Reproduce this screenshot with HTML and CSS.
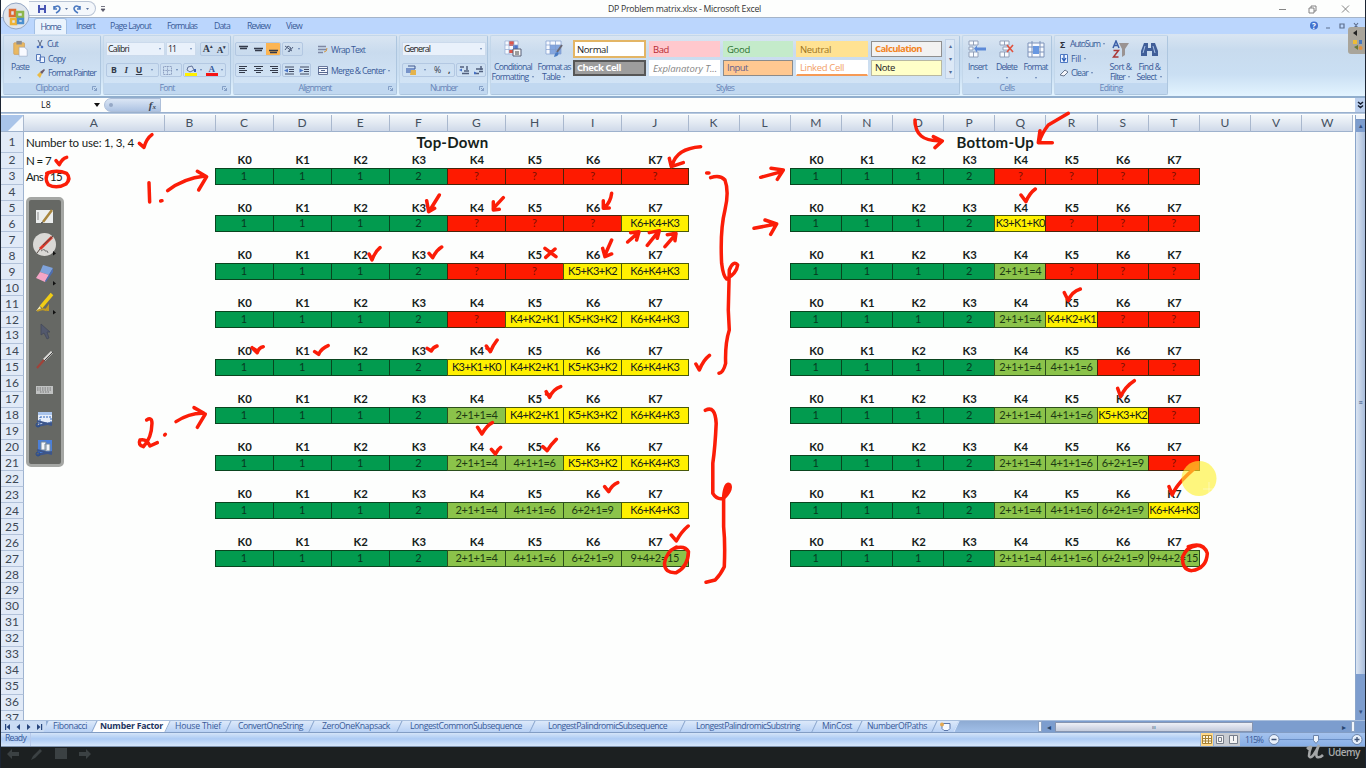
FILE: index.html
```html
<!DOCTYPE html>
<html lang="en">
<head>
<meta charset="utf-8">
<title>DP Problem matrix.xlsx - Microsoft Excel</title>
<link rel="stylesheet" href="styles.css">
</head>
<body>
<div class="screen">
  <header class="titlebar">
    <div class="qat">
      <svg width="60" height="12" viewBox="0 0 60 12"><path fill="#4653b3" d="M1 2h8v8H1z"/><path fill="#e8ecfa" d="M3 2h4v3H3zM3 7h4v3H3z"/><path d="M17 3v3h3M17 5q4-4 6 0q0 3-4 5M43 3v3h-3M43 5q-4-4-6 0q0 3 4 5" fill="none" stroke="#4a78c0" stroke-width="1.6"/><path fill="#58719d" d="M28 5h3l-1.5 2zM49 5h3l-1.5 2z"/></svg>
    </div>
    <svg class="qat-more" width="6" height="8"><path d="M1 1.5h4M1 4h4L3 6.500z" stroke="#556" fill="#556" stroke-width=".8"/></svg>
    <span class="title" data-w="153">DP Problem matrix.xlsx - Microsoft Excel</span>
    <svg class="win" width="76" height="12" viewBox="0 0 76 12" fill="none" stroke="#777" stroke-width=".9"><path d="M1 6.500h7M31 5h5v5h-5zM33 5V3h5v5h-2M64 2.500l7 7M71 2.500l-7 7"/></svg>
  </header>

  <nav class="tabs">
    <span class="tab on"><b data-w="20">Home</b></span>
    <span class="tab t2"><b data-w="19">Insert</b></span>
    <span class="tab t3"><b data-w="41">Page Layout</b></span>
    <span class="tab t4"><b data-w="30">Formulas</b></span>
    <span class="tab t5"><b data-w="16">Data</b></span>
    <span class="tab t6"><b data-w="23">Review</b></span>
    <span class="tab t7"><b data-w="16">View</b></span>
    <svg class="mdi" width="56" height="12" viewBox="0 0 56 12"><circle cx="9" cy="5.500" r="4" fill="#3f71cf"/><text x="7" y="8.500" font-size="8" fill="#fff" font-weight="bold">?</text><path d="M21 8h4M35 4h4v4h-4zM49 3l4 5M53 3l-4 5" fill="none" stroke="#5d6e8e" stroke-width="1.200"/></svg>
  </nav>

  <section class="ribbon">
    <div class="group clipboard">
      <div class="body">
        <div class="big paste"><svg width="18" height="20" viewBox="0 0 18 20"><rect x="2" y="3" width="12" height="13" rx="1" fill="#e9b861" stroke="#c8924a" stroke-width=".6"/><path fill="#8b8c90" d="M5 1h6v4H5z"/><path fill="#f8faff" stroke="#8a9cbc" stroke-width=".6" d="M8 8h6l3 3v7H8z"/></svg><span data-w="18">Paste</span><i class="dd"></i></div>
        <div class="stack">
          <div class="line"><svg width="8" height="9" viewBox="0 0 8 9"><path d="M2 0l3 6M6 0L3 6" stroke="#5a6480" fill="none"/><circle cx="2" cy="7" r="1.300" fill="#456ec4"/><circle cx="6" cy="7" r="1.300" fill="#456ec4"/></svg><span data-w="11">Cut</span></div>
          <div class="line"><svg width="9" height="9" viewBox="0 0 9 9"><path d="M.5.500h4v6h-4zM4 3h4.500v5.500H4z" fill="#eef4ff" stroke="#5679b9"/></svg><span data-w="17">Copy</span></div>
          <div class="line"><svg width="9" height="9" viewBox="0 0 9 9"><path d="M1 6l3-3 2 2-2 4z" fill="#eabb46"/><path d="M4 3l2 2 3-4-1-1z" fill="#6d5a66"/></svg><span data-w="48">Format Painter</span></div>
        </div>
      </div>
      <footer><span data-w="33">Clipboard</span><svg class="launch" width="5" height="5"><path d="M.5 4V.500H4M2 2l2.500 2.500M4.500 2v2.500H2" fill="none" stroke="#7591bb" stroke-width=".8"/></svg></footer>
    </div>

    <div class="group font">
      <div class="body rows">
        <div class="row"><div class="combo w58"><span data-w="21">Calibri</span><i class="dd"></i></div><div class="combo w30"><span data-w="8">11</span><i class="dd"></i></div><div class="btns w29 push4"><em class="serif big-a">A<sup>▴</sup></em><em class="serif">A<sup>▾</sup></em></div></div>
        <div class="row"><div class="btns w53"><em class="bold">B</em><em class="ital">I</em><em class="under">U</em><i class="dd"></i></div><div class="btns w23"><svg width="9" height="9"><path d="M.5.500h8v8h-8zM4.500 0v9M0 4.500h9" fill="none" stroke="#8a9bbd" stroke-dasharray="1 .6"/></svg><i class="dd"></i></div><div class="btns w44"><svg width="12" height="12" viewBox="0 0 12 12"><path d="M3 3l4-1 2 4-4 2-3-2z" fill="#d9e4f5" stroke="#61739a"/><path d="M10 5v3" stroke="#3f65b5" stroke-width="2"/><path fill="#fff000" d="M0 9h12v3H0z"/></svg><i class="dd"></i><svg width="12" height="12" viewBox="0 0 12 12"><text x="2.500" y="8" font-size="9" font-weight="bold" fill="#395b9d" font-family="Liberation Serif">A</text><path fill="#f51414" d="M0 9h12v3H0z"/></svg><i class="dd"></i></div></div>
      </div>
      <footer><span data-w="15">Font</span><svg class="launch" width="5" height="5"><path d="M.5 4V.500H4M2 2l2.500 2.500M4.500 2v2.500H2" fill="none" stroke="#7591bb" stroke-width=".8"/></svg></footer>
    </div>

    <div class="group align">
      <div class="body split">
        <div class="rows">
          <div class="row"><div class="btns w46"><svg width="44" height="13" viewBox="0 0 44 13"><path fill="#fcb553" d="M30 0h14v13H30z"/><path d="M3 3.500h9M4 5.500h7M18 5.500h9M19 7.500h7M33 7.500h9M34 9.500h7" stroke="#333a4a" stroke-width="1.400"/></svg></div><div class="btns w21"><svg width="10" height="10"><path d="M1 2l7 5M1 6l3-4 3 2-3 4M5 8l4-5" fill="none" stroke="#51607e"/></svg><i class="dd"></i></div></div>
          <div class="row"><div class="btns w46"><svg width="44" height="12" viewBox="0 0 44 12"><path d="M3 2.500h8M3 4.500h6M3 6.500h8M3 8.500h6M18 2.500h9M20 4.500h5M18 6.500h9M20 8.500h5M34 2.500h8M36 4.500h6M34 6.500h8M36 8.500h6" stroke="#333a4a" stroke-width="1.200"/></svg></div><div class="btns w29"><svg width="26" height="11" viewBox="0 0 26 11"><path d="M1 2h9M5 4.500h5M5 6.500h5M1 9h9M16 2h9M20 4.500h5M20 6.500h5M16 9h9" stroke="#404a62"/><path fill="#4b76c7" d="M0 5.500l4-2v4zM19.500 5.500l-4-2v4z"/></svg></div></div>
        </div>
        <div class="rows wraps">
          <div class="line"><svg width="10" height="9"><path d="M0 1.500h8M0 4.500h9M0 7.500h5" stroke="#7d87a3" stroke-width="1.400"/><path d="M9 3q0 4-3 4" fill="none" stroke="#d79a46"/></svg><span data-w="34">Wrap Text</span></div>
          <div class="line"><svg width="10" height="9"><path d="M.5.500h9v8h-9z" fill="#f3f7ff" stroke="#69789b"/><path d="M0 2.500h10M0 6.500h10M3 4.500h4" stroke="#55678f"/></svg><span data-w="54">Merge &amp; Center</span><i class="dd"></i></div>
        </div>
      </div>
      <footer><span data-w="33">Alignment</span><svg class="launch" width="5" height="5"><path d="M.5 4V.500H4M2 2l2.500 2.500M4.500 2v2.500H2" fill="none" stroke="#7591bb" stroke-width=".8"/></svg></footer>
    </div>

    <div class="group number">
      <div class="body rows">
        <div class="row"><div class="combo w84"><span data-w="26">General</span><i class="dd"></i></div></div>
        <div class="row"><div class="btns w53"><svg width="10" height="10"><path d="M0 3h9v5H0z" fill="#7793c9"/><path d="M5 5h5v5H4z" fill="#e4b34c"/><path d="M2 1h7v3" fill="none" stroke="#40598f"/></svg><i class="dd"></i><em>%</em><em class="bold">,</em></div><div class="btns w31"><svg width="25" height="10" viewBox="0 0 25 10"><path d="M1 2h4M8 1v4M5 6h5M3 8.500h7M16 8.500h4M22 1v4M17 4h7M20 6.500h4" stroke="#51607e" stroke-width="1.500"/><path d="M0 5l3-1.500v3zM18 8l-3-1.500v3z" fill="#4471c8"/></svg></div></div>
      </div>
      <footer><span data-w="27">Number</span><svg class="launch" width="5" height="5"><path d="M.5 4V.500H4M2 2l2.500 2.500M4.500 2v2.500H2" fill="none" stroke="#7591bb" stroke-width=".8"/></svg></footer>
    </div>

    <div class="group styles">
      <div class="body">
        <div class="big w46"><svg width="18" height="18" viewBox="0 0 18 18"><path d="M1 1h13v13H1z" fill="#f7faff"/><path d="M5 1h5v5H5zM5 10h4v3H5z" fill="#df5549"/><path d="M9 5h5v4H9z" fill="#4d76cd"/><path d="M1 1h13v13H1zM1 5h13M1 9.500h13M5 1v13M10 1v13" fill="none" stroke="#92a9d1" stroke-width=".7"/><path d="M9 9h8v7H9z" fill="#f5f5f5" stroke="#596178"/><path d="M11 12h4M11 14h4" stroke="#444"/></svg><span data-w="38">Conditional</span><span class="second"><span data-w="37">Formatting</span><i class="dd"></i></span></div>
        <div class="big w36"><svg width="18" height="18" viewBox="0 0 18 18"><path d="M1 1h15v13H1z" fill="#f7faff"/><path d="M5 5h11v9H5z" fill="#84a6df"/><path d="M1 1h15v13H1zM1 5h15M1 9.500h15M5 1v13M10.500 1v13" fill="none" stroke="#7f9cce" stroke-width=".7"/><path d="M17 5l-5 7" stroke="#6a6873" stroke-width="2"/><path d="M9 17q1-5 4-5q2 4-4 5" fill="#497bc3"/></svg><span data-w="33">Format as</span><span class="second"><span data-w="18">Table</span><i class="dd"></i></span></div>
        <div class="gallery">
          <span class="st normal"><b data-w="31">Normal</b></span><span class="st bad"><b data-w="16">Bad</b></span><span class="st good"><b data-w="23">Good</b></span><span class="st neutral"><b data-w="31">Neutral</b></span><span class="st calc"><b data-w="47">Calculation</b></span>
          <span class="st check"><b data-w="44">Check Cell</b></span><span class="st expl"><b data-w="64">Explanatory T...</b></span><span class="st input"><b data-w="21">Input</b></span><span class="st linked"><b data-w="44">Linked Cell</b></span><span class="st note"><b data-w="20">Note</b></span>
        </div>
        <div class="gscroll"><i>▴</i><i>▾</i><i>▾</i></div>
      </div>
      <footer><span data-w="18">Styles</span></footer>
    </div>

    <div class="group cells">
      <div class="body">
        <div class="big w29"><svg width="19" height="18" viewBox="0 0 19 18"><path d="M1 1h9v4H1zM1 12h9v5H1zM1 7h4v3H1zM5.500 1v4M5.500 12v5" fill="#f8fbff" stroke="#8a99b3" stroke-width=".9"/><path d="M6 8.500l3-3v2h9v3H9v2z" fill="#5c8ad8"/></svg><span data-w="19">Insert</span><i class="dd"></i></div>
        <div class="big w29"><svg width="17" height="18" viewBox="0 0 17 18"><path d="M2 1h9v4H2zM2 12h9v5H2zM5 7h6v3H5zM6.500 1v4M6.500 12v5" fill="#f8fbff" stroke="#8a99b3" stroke-width=".9"/><path d="M9 5l6 7M15 5l-6 7" stroke="#e1523e" stroke-width="1.600"/></svg><span data-w="21">Delete</span><i class="dd"></i></div>
        <div class="big w28"><svg width="18" height="18" viewBox="0 0 18 18"><path d="M1 3h16v14H1zM1 7h16M1 12h16M5 1v16M13 1v16" fill="#f8fbff" stroke="#7d92b9"/><path d="M6 6h6v8H6z" fill="#6797e1"/></svg><span data-w="24">Format</span><i class="dd"></i></div>
      </div>
      <footer><span data-w="15">Cells</span></footer>
    </div>

    <div class="group editing">
      <div class="body">
        <div class="stack">
          <div class="line"><em class="bold sigma">Σ</em><span data-w="30">AutoSum</span><i class="dd"></i></div>
          <div class="line"><svg width="8" height="9"><path d="M.5.500h7v8h-7z" fill="#edf4ff" stroke="#4d78c2"/><path d="M4 1v5M2 4l2 3 2-3" fill="none" stroke="#2f62bb" stroke-width="1.300"/></svg><span data-w="10">Fill</span><i class="dd"></i></div>
          <div class="line"><svg width="8" height="8"><path d="M0 6l5-5 3 2-4 4z" fill="#f6f6fa" stroke="#68768e"/></svg><span data-w="17">Clear</span><i class="dd"></i></div>
        </div>
        <div class="big w29"><svg width="18" height="18" viewBox="0 0 18 18"><path d="M1 8L4 1l3 7M2 5.500h4" fill="none" stroke="#3c5fa8" stroke-width="1.500"/><path d="M1.500 10.500h5L1.500 17h5" fill="none" stroke="#aa3838" stroke-width="1.500"/><path d="M7 3h10l-4 6v6l-3 2V9z" fill="#9a9392"/></svg><span data-w="22">Sort &amp;</span><span class="second"><span data-w="15">Filter</span><i class="dd"></i></span></div>
        <div class="big w28"><svg width="17" height="18" viewBox="0 0 17 18"><path d="M3 3h4v5h3V3h4l3 8v5h-6v-5H6v5H0v-5z" fill="#405e98"/><path d="M4 6L2 13M12 6l2 7" stroke="#a8c1e8"/></svg><span data-w="22">Find &amp;</span><span class="second"><span data-w="20">Select</span><i class="dd"></i></span></div>
      </div>
      <footer><span data-w="23">Editing</span></footer>
    </div>
  </section>

  <section class="formula">
    <div class="namebox"><span data-w="10">L8</span><i></i></div>
    <div class="fx"><u></u><em>f<small>x</small></em></div>
    <div class="fbox"></div>
    <div class="expand"><svg width="9" height="10"><path d="M2 2l2.500 2L7 2M2 5.500l2.500 2L7 5.500" fill="none" stroke="#172033" stroke-width="1.600"/></svg></div>
  </section>

  <main class="work">
    <div class="sheet" id="sheet"></div>
    <aside class="vscroll"><i class="grip"></i><i class="up">▴</i><i class="thumb">≡</i><i class="down">▾</i></aside>
  </main>

  <nav class="sheets">
    <svg class="nav" width="45" height="12" viewBox="0 0 45 12" fill="#26457d"><path d="M4 3h1.200v6H4zM9 3v6L5.500 6zM19 3v6l-3.500-3zM26 3v6l3.500-3zM36 3v6l3.500-3zM40 3h1.200v6H40z"/></svg>
    <span class="s" style="width:49px"><b data-w="34">Fibonacci</b></span><span class="s cur" style="width:73px"><b data-w="63">Number Factor</b></span><span class="s" style="width:61px"><b data-w="46">House Thief</b></span><span class="s" style="width:83px"><b data-w="65">ConvertOneString</b></span><span class="s" style="width:88px"><b data-w="68">ZeroOneKnapsack</b></span><span class="s" style="width:133px"><b data-w="112">LongestCommonSubsequence</b></span><span class="s" style="width:150px"><b data-w="119">LongestPalindromicSubsequence</b></span><span class="s" style="width:132px"><b data-w="104">LongestPalindromicSubstring</b></span><span class="s" style="width:45px"><b data-w="30">MinCost</b></span><span class="s" style="width:75px"><b data-w="60">NumberOfPaths</b></span><span class="s new" style="width:22px"><svg width="13" height="9"><path d="M3 1.500h8v5l-2 2H5l-2-2z" fill="#f6faff" stroke="#5c78aa"/><circle cx="3" cy="2.500" r="2" fill="#e4a951"/></svg></span>
    <div class="hscroll"><i class="end"></i><i>◂</i><i class="hthumb">ııı</i><i class="rt">▸</i><i class="end"></i></div>
  </nav>

  <footer class="status">
    <span class="ready" data-w="21">Ready</span>
    <div class="views">
      <svg width="40" height="13" viewBox="0 0 40 13"><path fill="#ffd98a" d="M1 0h12v13H1z"/><path d="M2.500 2.500h9v8h-9zM2 5.500h9M2 8h9M5.500 2v9M8.500 2v9" fill="#fff8df" stroke="#a78235"/><path fill="#c7cbd1" d="M14 0h26v13H14z"/><path d="M16.500 2.500h7v8h-7zM18.500 4.500h3v4h-3zM29.500 2.500h8v8h-8zM33.500 2v6" fill="#f4f4f4" stroke="#777e8a"/></svg>
      <span data-w="18">115%</span>
      <svg class="slider" width="96" height="13" viewBox="0 0 96 13"><path d="M11 6.500h76" stroke="#6a90c8"/><circle cx="6" cy="6.500" r="5" fill="#e8f0fb" stroke="#6a83aa"/><circle cx="89" cy="6.500" r="5" fill="#e8f0fb" stroke="#6a83aa"/><path d="M3.500 6.500h5M86.500 6.500h5M89 4v5" stroke="#3d5276" stroke-width="1.300"/><path d="M45.500 2.500h5v5L48 10.500l-2.500-3z" fill="#eef4fb" stroke="#6a83aa"/></svg>
    </div>
  </footer>

  <footer class="player">
    <svg width="90" height="16" viewBox="0 0 90 16" fill="#3b4143"><path d="M6 7l5-5v3h7v4h-7v3zM30 13l2-4 7-7 2 2-7 7zM54 1h12v11H54zM90 7l-5-5v3h-7v4h7v3z"/></svg>
    <div class="brand"><svg width="19" height="17" viewBox="0 0 19 17"><path d="M2 5Q5 2 6 3Q4 8 4 12Q6 16 11 7L14 1Q10 10 12 13Q15 14 18 11" fill="none" stroke="#a4a6a7" stroke-width="2.600"/></svg><span data-w="32">Udemy</span></div>
  </footer>

  <div class="orb"><svg width="28" height="28" viewBox="0 0 28 28"><circle cx="14" cy="14" r="13" fill="#dfe5ed" stroke="#93a6c4"/><g fill="none" stroke-width="2.500"><path d="M8 8h5v6H8z" stroke="#de6b32"/><path d="M15 10h6v5h-6z" stroke="#8fb64c"/><path d="M9 17h5v5H9z" stroke="#efb335"/><path d="M16 17h5v4h-5z" stroke="#4b8fcf"/></g></svg></div>
  <div class="sidetab"><svg width="17" height="30"><path d="M9 3v6L5 6z" fill="#222"/><path d="M5 13h4v4H5z" fill="#edbc36"/><path d="M11 13h3v4h-3z" fill="#4778bd"/><path d="M6 20l4-2v5z" fill="#687a39"/><circle cx="12.500" cy="21" r="2" fill="#e4913c"/></svg></div>

  <aside class="pens">
    <svg width="30" height="26" viewBox="0 0 30 26"><path d="M6 7h17v13H6z" fill="#eceeee"/><path d="M8 9v8" stroke="#888"/><path d="M22 7L13 19" stroke="#a8863e" stroke-width="2.500"/><path d="M13 19l-2 1" stroke="#333"/></svg>
    <svg width="30" height="30" viewBox="0 0 30 30"><circle cx="14.500" cy="15.500" r="11.500" fill="#dad9d6"/><path d="M22 8L10 20" stroke="#d93627" stroke-width="2.800"/><path d="M23 7L13 16M10 20l-3 4" stroke="#584943"/><path d="M11 22q4-3 4 0q3-1 3 2" fill="none" stroke="#777"/><path d="M23 22l3 2.500-3 2z" fill="#111"/></svg>
    <svg width="30" height="29" viewBox="0 0 30 29"><path d="M13 6l10 3-4 7-9-3z" fill="#7fa3db"/><path d="M10 13l9 3-4 7-9-4z" fill="#f4a5c6"/><path d="M23 9v4l-7 10-1-1z" fill="#4e6eb0"/><path d="M23 22l3 2.500-3 2z" fill="#111"/></svg>
    <svg width="30" height="30" viewBox="0 0 30 30"><path d="M22 6L11 19" stroke="#f0cd16" stroke-width="3.500"/><path d="M10 18l-4 5 5-2" fill="#faf3be"/><path d="M7 23q5-3 9-1l2-3v4" fill="none" stroke="#bf9a24" stroke-width="2"/><path d="M23 22l3 2.500-3 2z" fill="#111"/></svg>
    <svg width="30" height="28" viewBox="0 0 30 28"><path d="M11 6v11l3-2 3 6 2-1-2-6h3z" fill="#53596d" stroke="#414656" stroke-width=".7"/></svg>
    <svg width="30" height="30" viewBox="0 0 30 30"><path d="M22 6l-8 8" stroke="#d8d8d5" stroke-width="3"/><path d="M23 6l-9 9" stroke="#444"/><path d="M14 14l-7 8" stroke="#a14239" stroke-width="2"/></svg>
    <svg width="30" height="28" viewBox="0 0 30 28"><path d="M6 10h17v8H6z" fill="#c0c2c2"/><path d="M7 12h15M7 14h15M10 16h9" stroke="#777" stroke-dasharray="1.500 1"/></svg>
    <svg width="30" height="29" viewBox="0 0 30 29"><path d="M8 8h14v13H8z" fill="#e7eefa"/><path d="M8 8h14v3H8z" fill="#a9c4ec"/><path d="M10 13h11v6H10z" fill="none" stroke="#2c64bd" stroke-dasharray="2 1"/><path d="M7 17l15 4M7 22l15-3" stroke="#3d568a" stroke-width="2"/><circle cx="8" cy="21" r="2" fill="none" stroke="#264b91"/></svg>
    <svg width="30" height="28" viewBox="0 0 30 28"><path d="M8 7h14v13H8z" fill="#4b7fd8"/><path d="M11 9h5v8h-5zM15 11h5v7h-5z" fill="#f4f6fb" stroke="#789"/><path d="M7 17l15 4M7 22l15-3" stroke="#3d568a" stroke-width="2"/><circle cx="8" cy="21" r="2" fill="none" stroke="#264b91"/></svg>
  </aside>

  <svg class="ink" viewBox="0 0 1366 768">
    <g transform="translate(0 130) scale(.3333)"><path d="M418 40L432 52Q440 25 456 14M168 92l10 12q8-18 22-22M140 130Q170 117 200 130Q214 145 198 162Q170 178 145 164Q132 145 145 128M447 158L449 216M482 213l4-1M503 182Q550 145 615 138M592 124L620 140L596 180"/></g>
    <g transform="translate(360 130) scale(.3333)"><path d="M1022 50Q950 55 937 105M928 85L934 110L970 98M1040 129h7M238 195L210 240M200 212L206 245L224 235M430 203L400 235M400 215L400 240L418 238M755 190Q752 215 735 232M730 212L730 235L748 234M803 336L835 308M812 308L837 305L830 330M862 346L895 305M868 308L898 302L892 325M915 350L948 312M922 314L948 310L945 332M27 372L36 390Q45 365 60 353M207 370L218 383Q230 360 245 351M555 355L588 380M585 357L557 382M755 330L735 375M728 355L735 380L755 372"/><path d="M1052 143Q1080 133 1095 150Q1108 185 1095 240Q1080 300 1085 400Q1090 440 1100 447Q1130 430 1133 405Q1120 390 1108 420L1105 540L1108 600Q1095 640 1097 700Q1090 728 1077 730"/></g>
    <g transform="translate(740 100) scale(.3333)"><path d="M525 60Q525 125 600 122M580 110L607 123L585 143M985 40L925 75Q905 100 897 128M900 92L895 128L937 128M62 232L125 215M93 205L130 210L112 238M42 385L108 372M75 360L110 372L92 403M843 285L858 305Q868 280 886 267"/></g>
    <g transform="translate(0 190) scale(.3333)"><path d="M528 695Q570 668 612 670M582 653L616 672L592 712M440 690Q456 680 456 700Q455 745 430 770Q413 765 420 750Q440 745 450 768L472 758M494 735l2-2"/></g>
    <g transform="translate(220 330) scale(.338 .3333)"><path d="M95 53L110 68Q115 52 128 50M98 55l12 8M280 65L292 73Q300 55 320 47M613 55L625 63Q630 52 642 48M788 48L800 65Q808 45 820 30M790 55l10 6M1408 102L1418 120Q1430 90 1448 76M965 185L975 202Q985 178 1008 170M966 192l12 4M762 292L775 312Q790 285 806 278M803 358L815 372Q822 358 830 352M955 350L968 362Q978 345 995 328M1138 470L1150 485Q1160 465 1177 458M1335 615L1350 633Q1365 605 1385 588M1345 655Q1375 645 1386 665Q1385 710 1350 728Q1315 730 1315 700Q1320 665 1350 651"/><path d="M1436 241Q1465 225 1468 280Q1465 350 1458 400L1458 490Q1470 510 1490 505Q1515 480 1508 465Q1495 455 1490 500M1500 470L1494 490M1490 500L1490 590Q1495 640 1492 710Q1480 735 1465 750L1438 757"/></g>
    <g transform="translate(1000 280) scale(.3333)"><path d="M193 38L205 62Q215 35 241 27M353 325L362 350Q375 320 403 302M507 620L517 645Q530 610 590 560M565 800Q610 785 622 820Q620 865 575 872Q545 870 548 830Q560 800 590 797"/></g>
    <circle cx="1199" cy="478.500" r="17.500" fill="#fff02e" fill-opacity=".62"/>
    <path class="cross" d="M1203 489h12M1209 482v14"/>
  </svg>
</div>
<script src="app.js"></script>
</body>
</html>
```
FILE: styles.css
```css
* { box-sizing: border-box; }
body { margin: 0; font-family: "Open Sans", "Noto Sans", sans-serif; font-size: 8.700px; color: #395a98; overflow: hidden; }
i, em { font-style: normal; }
b { font-weight: inherit; }
svg { display: block; flex: none; }
[data-w] { white-space: nowrap; }
.screen { position: relative; width: 1366px; height: 768px; display: flex; flex-direction: column; background: #fdfefd; border-left: 1px solid #1c2533; border-right: 1px solid #1c2533; }

.titlebar { height: 18px; flex: none; display: flex; align-items: center; border-bottom: 1px solid #a5b4c8; padding-left: 28px; background: #fdfefd; }
.qat { width: 67px; height: 15px; border: 1px solid #b9c4d5; border-left: 0; border-radius: 0 8px 8px 0; padding: 1px 0 0 8px; background: #f4f7fb; }
.qat-more { margin-left: 4px; }
.title { margin-left: 502px; color: #333; width: 153px; }
.win { margin-left: 517px; }

.tabs { height: 16px; flex: none; display: flex; background: #bbd6fd; padding-left: 33px; align-items: stretch; line-height: 17px; }
.tab { display: flex; justify-content: center; }
.on { width: 33px; background: #eaf3fd; border: 1px solid #a2bfe4; border-bottom: 0; border-radius: 3px 3px 0 0; line-height: 16px; }
.t2 { margin-left: 9px; } .t3 { margin-left: 15px; } .t4 { margin-left: 16px; } .t5 { margin-left: 17px; } .t6 { margin-left: 17px; } .t7 { margin-left: 16px; }
.mdi { margin: 2px 4px 0 auto; }

.ribbon { height: 64px; flex: none; display: flex; gap: 2px; padding: 1px 0 1px 2px; background: linear-gradient(#d9e5f2, #c8dbee 25%, #cadff3 65%, #e3f4ff); border-bottom: 2px solid #91aecd; }
.group { height: 60px; display: flex; flex-direction: column; border: 1px solid #c3d7ea; border-right-color: #adc6df; border-bottom-color: #adc6df; border-radius: 2px; background: linear-gradient(#d9e5f2, #c9dbee 28%, #d5e7f8); }
.group footer { height: 11px; flex: none; line-height: 11px; background: #c1d8f0; color: #6685b8; display: flex; justify-content: center; position: relative; }
.launch { position: absolute; right: 3px; top: 3px; }
.clipboard { width: 98px; } .font { width: 128px; } .align { width: 164px; } .number { width: 89px; } .styles { width: 470px; } .cells { width: 90px; } .editing { width: 114px; }
.body { height: 47px; flex: none; display: flex; }
.rows { display: flex; flex-direction: column; gap: 6px; padding: 6px 0 0 2px; height: 47px; }
.row { display: flex; height: 15px; gap: 1px; flex: none; }
.split { gap: 6px; }
.split > .rows { padding-left: 1px; }
.wraps .line { height: 15px; }
.stack { display: flex; flex-direction: column; padding-top: 1px; }
.stack .line { height: 14.600px; }
.line { display: flex; align-items: center; gap: 2px; }
.line svg { margin-right: 1px; }
.dd { width: 0; height: 0; border: 1.500px solid transparent; border-top: 2px solid #6583b3; border-bottom: 0; flex: none; margin: 0 1px; }
.combo { background: #e9f1fb; border: 1px solid #cbdaec; display: flex; align-items: center; justify-content: space-between; padding: 0 2px 0 1px; color: #222; height: 14px; }
.btns { border: 1px solid #b3c8e2; border-radius: 2px; height: 14px; display: flex; align-items: center; justify-content: space-around; color: #333a4a; overflow: hidden; }
.w21 { width: 21px; } .w23 { width: 22px; } .w28 { width: 29px; } .w29 { width: 29px; } .w30 { width: 30px; } .w31 { width: 30px; } .w36 { width: 38px; } .w44 { width: 43px; } .w46 { width: 46px; } .w53 { width: 53px; } .w58 { width: 59px; } .w84 { width: 84px; }
.styles .w46 { width: 44px; }
.push4 { margin-left: 3px; }
.serif { font: bold 9px "Liberation Serif", serif; } .serif sup { font-size: 5px; } .big-a { font-size: 10px; }
.bold { font-weight: bold; } .ital { font: italic bold 9px "Liberation Serif", serif; } .under { text-decoration: underline; font-weight: bold; }
.big { display: flex; flex-direction: column; align-items: center; padding-top: 4px; line-height: 9.500px; }
.big > svg { height: 18px; margin-bottom: 5px; }
.big > .dd { margin-top: 4px; }
.paste { width: 32px; }
.second { display: flex; align-items: center; gap: 2px; }
.gallery { display: grid; grid-template-columns: 73px 71px 70px 72px 71px; column-gap: 3px; grid-template-rows: 16px 16px; row-gap: 3px; padding-top: 5px; font-size: 9.500px; line-height: 15px; width: 370px; }
.st { padding-left: 3px; border: 1px solid transparent; color: #222; }
.normal { border: 2px solid #e3b565; background: #fff; margin: -1px 0; padding-left: 2px; }
.bad { background: #ffc8cd; color: #b62a33; } .good { background: #c4ebca; color: #2b7130; } .neutral { background: #ffe292; color: #9c7420; }
.calc { background: #f2f2f2; border-color: #8f8f8f; color: #f3851f; font-weight: bold; line-height: 14px; }
.check { background: #9d9d9d; border: 2px solid #565656; color: #fff; font-weight: bold; padding-left: 2px; line-height: 12px; }
.expl { background: #fff; color: #858585; font-style: italic; } .input { background: #ffc891; border-color: #8b8b8b; color: #66618d; line-height: 14px; }
.linked { background: #fff; color: #f2a067; border-bottom: 2px solid #f69a55; line-height: 14px; } .note { background: #ffffc8; border-color: #b8b8a2; line-height: 14px; }
.gscroll { width: 10px; margin-left: 2px; margin-top: 3px; height: 40px; display: flex; flex-direction: column; justify-content: space-around; text-align: center; background: #dce8f6; border: 1px solid #c0d2e8; font-size: 6px; line-height: 10px; color: #526b98; }
.editing .stack { width: 51px; padding-left: 5px; }
.sigma { color: #2a2d38; width: 9px; font-size: 9px; }

.formula { height: 15px; flex: none; display: flex; background: #fdfefd; border-bottom: 1px solid #9ab1ce; }
.namebox { width: 103px; display: flex; align-items: center; padding-left: 40px; color: #111; }
.namebox i { margin-left: 43px; border: 3px solid transparent; border-top: 4px solid #111; border-bottom: 0; }
.fx { width: 57px; border-radius: 8px 0 0 8px; background: linear-gradient(#dbe6f5, #adc3e3); border: 1px solid #adbfd9; display: flex; justify-content: space-between; align-items: center; padding: 0 4px; }
.fx u { width: 4px; height: 4px; border-radius: 50%; background: #95a8c6; }
.fx em { font: italic bold 11px "Liberation Serif", serif; color: #3b4454; } .fx small { font-size: 7px; }
.fbox { flex: 1; }
.expand { width: 10px; background: #bcd0ee; padding: 2px 0 0 1px; }

.work { height: 607px; flex: none; display: flex; overflow: hidden; border-top: 1px solid #b7c9e0; padding-top: 1px; }
.sheet { width: 1354px; height: 900px; flex: none; display: grid; grid-template-columns: 23px 140.500px 51px 58.100px 58.100px 58.100px 58.100px 58.100px 58.100px 58.100px 66.400px 51px 51.200px 51.150px 51.150px 51.150px 51.150px 51.150px 51.150px 51.150px 51.150px 51.150px 51.150px 51.150px; grid-template-rows: 17px 20.700px repeat(36, 15.940px); font-family: Lato, "Open Sans", sans-serif; font-size: 11px; color: #15221a; }
.col { background: linear-gradient(#f4f8fb, #e2e9f2 50%, #cfd9e9); border-right: 1px solid #a9b8ce; border-bottom: 1px solid #9eb2cd; text-align: center; line-height: 15px; color: #44505f; font-size: 12px; }
.corner { background: linear-gradient(135deg, #a9c4e9 60%, #f4f8fd 61%); }
.rh { background: #e1eaf7; border-right: 1px solid #9eb3d0; border-bottom: 1px solid #b2c2da; display: flex; align-items: center; justify-content: center; font-size: 12px; color: #3d4856; line-height: 1; }
.txt { padding-left: 2px; white-space: nowrap; display: flex; align-items: center; line-height: 1; font-size: 11.500px; }
.ans span + span { margin-left: 7px; }
.name { font-weight: bold; text-align: center; line-height: 14.500px; font-size: 11.300px; }
.head { font-weight: bold; font-size: 15px; display: flex; align-items: center; justify-content: center; }
.td { padding-left: 9px; }
.cell { border: 1px solid rgba(12, 40, 15, .75); margin: -1px 0 0 -1px; text-align: center; line-height: 13.500px; white-space: nowrap; display: flex; justify-content: center; }
.g { background: #029b4f; color: #07391f; } .r { background: #fe1a00; color: #7c1003; } .y { background: #fff000; } .l { background: #8bc34a; color: #1d3a14; }

.vscroll { width: 10px; background: linear-gradient(90deg, #dbe5f2, #a9bddb); border-left: 1px solid #8aa5ca; display: flex; flex-direction: column; font-size: 7px; text-align: center; color: #344f80; }
.grip { height: 5px; background: #eff5fc; border-bottom: 1px solid #7795c1; flex: none; }
.up, .down { height: 12px; line-height: 12px; background: #7d9dce; flex: none; }
.thumb { height: 542px; padding-top: 266px; }
.down { height: 46px; padding-top: 32px; }

.sheets { height: 12px; flex: none; display: flex; background: linear-gradient(#8eabd3, #a1bfe8); border-top: 1px solid #a9bfdd; line-height: 11px; overflow: hidden; }
.nav { background: #cadcf4; }
.s { flex: none; background: linear-gradient(#dce9fa, #b8d1f5); display: flex; justify-content: center; border-right: 1px solid #8fa9cf; transform: skewX(-25deg); }
.s b, .s svg { transform: skewX(25deg); }
.cur { background: #fcfdff; font-weight: bold; color: #1e3561; }
.new { border-right-color: #dceaff; padding-top: 1px; }
.hscroll { margin-left: auto; width: 327px; padding-right: 10px; display: flex; align-items: center; background: #7c9dce; color: #27456f; font-size: 8px; }
.end { width: 4px; height: 11px; background: #f2f6fb; border: 1px solid #8da3c3; }
.end + i { width: 13px; text-align: center; }
.hthumb { width: 198px; height: 10px; background: linear-gradient(#eef0f7, #c4cbdc); border: 1px solid #8795b0; text-align: center; font-size: 5px; line-height: 8px; }
.rt { margin-left: auto; width: 14px; text-align: center; }

.status { height: 15px; flex: none; display: flex; justify-content: space-between; align-items: center; background: linear-gradient(#d4e4f8, #adcbf4 45%, #d6e6fb); border-bottom: 1px solid #7e93af; padding-left: 4px; border-top: 1px solid #829dc4; }
.ready { width: 26px; border-right: 1px solid #b7caeb; line-height: 11px; padding-bottom: 2px; }
.views { display: flex; align-items: center; gap: 5px; width: 165px; height: 13px; background: linear-gradient(#a5c3ee, #87aee5); }
.views span { width: 18px; }
.player { height: 21px; flex: none; background: #1c2021; display: flex; justify-content: space-between; }
.brand { display: flex; width: 60px; gap: 4px; color: #a9abac; font-size: 10px; line-height: 9px; font-weight: 600; margin-top: -3px; }
.brand span { margin-top: 4px; width: 32px; }

.orb { position: absolute; left: 1px; top: 2px; }
.sidetab { position: absolute; left: 1347px; top: 27px; width: 17px; height: 27px; background: #a9a59b; border-radius: 3px 0 0 3px; }
.pens { position: absolute; left: 25px; top: 197px; width: 38px; height: 270px; background: #666864; border: 3px solid #a5a7a4; border-radius: 5px; display: flex; flex-direction: column; align-items: center; padding-top: 3px; }
.ink { position: absolute; left: -1px; top: 0; width: 1366px; height: 768px; pointer-events: none; fill: none; }
.ink g path { stroke: #fb1d08; stroke-width: 10.500; stroke-linecap: round; stroke-linejoin: round; }
.ink .cross { stroke: #fff; stroke-opacity: .4; }
```
FILE: app.js
```javascript
const sheet = document.getElementById('sheet');
const add = (cls, row, col, text, span = 1) => {
  const el = document.createElement('div');
  el.className = cls;
  el.style.gridArea = `${row + 1} / ${col + 1} / span 1 / span ${span}`;
  el.textContent = text;
  sheet.append(el);
  return el;
};

add('col corner', 0, 0, '');
[...'ABCDEFGHIJKLMNOPQRSTUVW'].forEach((c, i) => add('col', 0, i + 1, c));
for (let r = 1; r <= 37; r++) add('rh', r, 0, r);

const fitted = (el, width) => {
  const s = document.createElement('span');
  s.dataset.w = width;
  s.textContent = el.textContent;
  el.replaceChildren(s);
};
fitted(add('txt', 1, 1, 'Number to use: 1, 3, 4'), 108);
fitted(add('txt', 2, 1, 'N = 7'), 25);
add('txt ans', 3, 1, '').innerHTML = '<span data-w="17">Ans</span><span data-w="12">15</span>';
fitted(add('head td', 1, 6, 'Top-Down', 2), 72);
fitted(add('head', 1, 16, 'Bottom-Up', 2), 77);

const sums = ['2+1+1=4', '4+1+1=6', '6+2+1=9', '9+4+2=15'];
const keys = ['K3+K1+K0', 'K4+K2+K1', 'K5+K3+K2', 'K6+K4+K3'];
// One letter per K4..K7 cell: r = unknown, y = formula, l = solved.
const topDown = ['rrrr', 'rrry', 'rryy', 'ryyy', 'yyyy', 'lyyy', 'llyy', 'llly', 'llll'];
const bottomUp = ['rrrr', 'yrrr', 'lrrr', 'lyrr', 'llrr', 'llyr', 'lllr', 'llly', 'llll'];

const table = (steps, col) => steps.forEach((step, n) => {
  const row = 2 + n * 3;
  for (let k = 0; k < 8; k++) {
    add('name', row, col + k, 'K' + k);
    if (k < 4) {
      add('cell g', row + 1, col + k, k === 3 ? 2 : 1);
      continue;
    }
    const kind = step[k - 4];
    const text = { r: '?', y: keys[k - 4], l: sums[k - 4] }[kind];
    const el = add('cell ' + kind, row + 1, col + k, text);
    if (kind !== 'r') fitted(el, kind === 'y' ? 49 : k === 7 ? 48.5 : 42);
  }
});
table(topDown, 3);
table(bottomUp, 13);

// Tighten or loosen tracking so every label takes its intended width.
document.querySelectorAll('[data-w]').forEach(el => {
  const range = document.createRange();
  range.selectNodeContents(el);
  const gap = (el.dataset.w - range.getBoundingClientRect().width) / el.textContent.length;
  el.style.letterSpacing = gap.toFixed(3) + 'px';
});
```
